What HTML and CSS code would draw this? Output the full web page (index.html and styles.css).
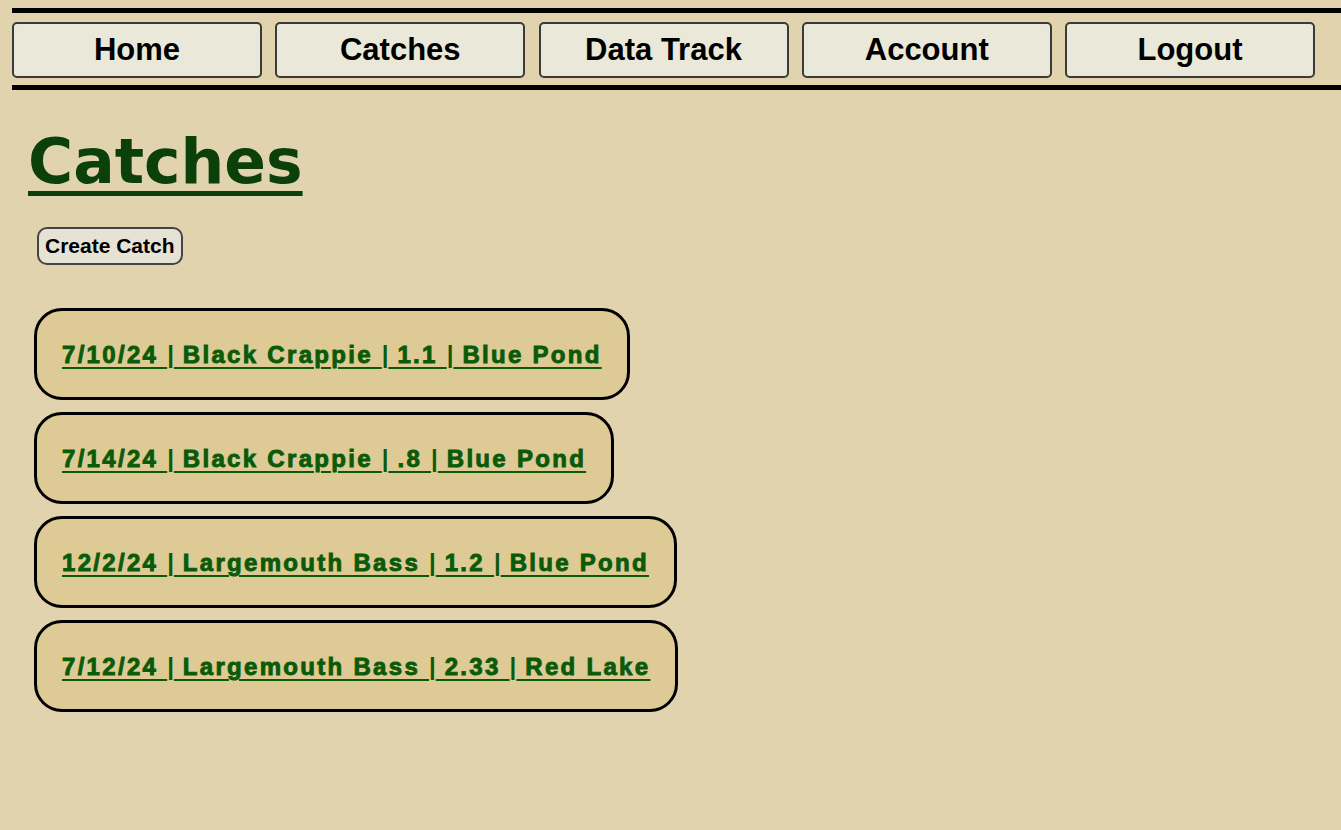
FILE: index.html
```html
<!DOCTYPE html>
<html lang="en">
<head>
<meta charset="utf-8">
<title>Catches</title>
<link rel="stylesheet" href="styles.css">
</head>
<body>
<nav class="nav">
  <a class="nav-btn" href="#">Home</a>
  <a class="nav-btn" href="#">Catches</a>
  <a class="nav-btn" href="#">Data Track</a>
  <a class="nav-btn" href="#">Account</a>
  <a class="nav-btn" href="#">Logout</a>
</nav>
<main class="main">
  <h1 class="title">Catches</h1>
  <button class="create-btn">Create Catch</button>
  <ul class="catch-list">
    <li class="catch-card"><a class="catch-link" href="#">7/10/24 <span class="sep">|</span> Black Crappie <span class="sep">|</span> 1.1 <span class="sep">|</span> Blue Pond</a></li>
    <li class="catch-card"><a class="catch-link" href="#">7/14/24 <span class="sep">|</span> Black Crappie <span class="sep">|</span> .8 <span class="sep">|</span> Blue Pond</a></li>
    <li class="catch-card"><a class="catch-link" href="#">12/2/24 <span class="sep">|</span> Largemouth Bass <span class="sep">|</span> 1.2 <span class="sep">|</span> Blue Pond</a></li>
    <li class="catch-card"><a class="catch-link" href="#">7/12/24 <span class="sep">|</span> Largemouth Bass <span class="sep">|</span> 2.33 <span class="sep">|</span> Red Lake</a></li>
  </ul>
</main>
</body>
</html>
```
FILE: styles.css
```css
html, body {
  margin: 0;
  padding: 0;
  background: #e1d3ad;
}
body {
  font-family: "Liberation Sans", Arial, sans-serif;
  overflow: hidden;
}
.nav {
  display: flex;
  gap: 13.25px;
  margin: 8px 0 0 12px;
  padding: 9px 0 7px 0;
  border-top: 5px solid #000;
  border-bottom: 5px solid #000;
}
.nav-btn {
  box-sizing: border-box;
  width: 250px;
  height: 56px;
  flex: none;
  display: flex;
  align-items: center;
  justify-content: center;
  background: #e9e8d9;
  border: 2px solid #3a3a3a;
  border-radius: 5px;
  color: #000;
  text-decoration: none;
  font-weight: bold;
  font-size: 31px;
}
.main {
  padding: 0 0 0 28px;
}
.title {
  margin: 32px 0 0 0;
  font-family: "DejaVu Sans", Verdana, sans-serif;
  font-size: 61.5px;
  font-weight: bold;
  line-height: 80px;
  color: #0b400b;
  text-decoration: underline;
  text-decoration-thickness: 5px;
  text-underline-offset: 8px;
  display: inline-block;
}
.create-btn {
  display: block;
  margin: 25px 0 0 9px;
  padding: 4px 6px;
  height: 38px;
  box-sizing: border-box;
  font-family: "Liberation Sans", Arial, sans-serif;
  font-weight: bold;
  font-size: 21px;
  line-height: 26px;
  background: #e6e3d6;
  color: #000;
  border: 2px solid #444;
  border-radius: 10px;
}
.catch-list {
  list-style: none;
  margin: 43px 0 0 6px;
  padding: 0;
  display: flex;
  flex-direction: column;
  align-items: flex-start;
  gap: 12px;
}
.catch-card {
  background: #ddca94;
  border: 3px solid #000;
  border-radius: 28px;
  padding: 31px 25px 29px 25px;
}
.catch-link {
  font-weight: bold;
  font-size: 24px;
  line-height: 26px;
  letter-spacing: 2.3px;
  color: #0a5a0a;
  -webkit-text-stroke: 0.9px #0a5a0a;
  text-decoration: underline;
  text-decoration-thickness: 2px;
  text-underline-offset: 4px;
}
.sep {
  display: inline-block;
  letter-spacing: 0;
  -webkit-text-stroke: 0;
}
```
